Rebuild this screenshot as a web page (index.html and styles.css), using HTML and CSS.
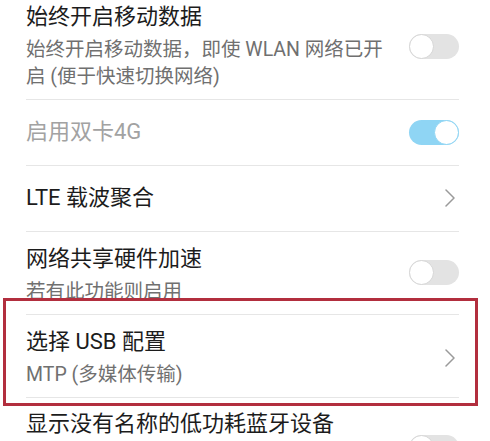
FILE: index.html
```html
<!DOCTYPE html>
<html lang="zh-CN">
<head>
<meta charset="utf-8">
<title>开发者选项</title>
<link rel="stylesheet" href="styles.css">
</head>
<body>
<div class="screen">
  <div class="list">
    <div class="row row--first">
      <div class="text">
        <div class="title">始终开启移动数据</div>
        <div class="sub">始终开启移动数据，即使 WLAN 网络已开启 (便于快速切换网络)</div>
      </div>
      <span class="switch"></span>
    </div>
    <div class="row row--single">
      <div class="text">
        <div class="title title--disabled">启用双卡4G</div>
      </div>
      <span class="switch switch--on"></span>
    </div>
    <div class="row row--single">
      <div class="text">
        <div class="title">LTE 载波聚合</div>
      </div>
      <svg class="chevron" viewBox="0 0 10 18" width="10" height="18"><polyline points="1,1 9,9 1,17" /></svg>
    </div>
    <div class="row">
      <div class="text">
        <div class="title">网络共享硬件加速</div>
        <div class="sub">若有此功能则启用</div>
      </div>
      <span class="switch switch--raised"></span>
    </div>
    <div class="row row--marked">
      <div class="text">
        <div class="title">选择 USB 配置</div>
        <div class="sub">MTP (多媒体传输)</div>
      </div>
      <svg class="chevron" viewBox="0 0 10 18" width="10" height="18"><polyline points="1,1 9,9 1,17" /></svg>
      <div class="highlight"></div>
    </div>
    <div class="row row--last">
      <div class="text">
        <div class="title">显示没有名称的低功耗蓝牙设备</div>
      </div>
      <span class="switch switch--low"></span>
    </div>
  </div>
</div>
</body>
</html>
```
FILE: styles.css
```css
html, body {
  margin: 0;
  padding: 0;
  background: #ffffff;
}

body {
  width: 490px;
  height: 441px;
  overflow: hidden;
  font-family: "Roboto", "Noto Sans CJK SC", sans-serif;
}

.screen {
  width: 490px;
  height: 441px;
  overflow: hidden;
}

.list {
  margin-top: -10px;
}

.row {
  position: relative;
  display: flex;
  align-items: center;
  margin: 0 31px 0 26px;
  padding: 12px 0 9px;
  border-bottom: 1px solid #e6e6e6;
}

.row--single {
  padding: 17px 0 18px;
}

.row--last {
  align-items: flex-start;
  border-bottom: none;
  padding-top: 11px;
  padding-bottom: 40px;
}

.text {
  flex: 1;
  min-width: 0;
  padding-right: 24px;
}

.title {
  font-size: 22px;
  line-height: 30px;
  color: #1c1c1c;
  white-space: nowrap;
}

.title--disabled {
  color: #a2a2a2;
}

.sub {
  margin-top: 4px;
  font-size: 19.5px;
  line-height: 27px;
  color: #707070;
}

.switch {
  position: relative;
  flex: none;
  width: 50px;
  height: 25px;
  border-radius: 13px;
  background: #e3e3e3;
}

.switch::after {
  content: "";
  position: absolute;
  left: 0;
  top: 0;
  width: 23px;
  height: 23px;
  border-radius: 50%;
  background: #ffffff;
  border: 1px solid #d6d6d6;
}

.switch--raised {
  margin-bottom: 4px;
}

.switch--low {
  margin-top: 26px;
}

.switch--on {
  background: #8fd5f4;
}

.switch--on::after {
  left: auto;
  right: 0;
  border-color: #8fd5f4;
}

.chevron {
  flex: none;
  margin-right: 4px;
  fill: none;
  stroke: #9a9a9a;
  stroke-width: 1.5;
  stroke-linecap: round;
  stroke-linejoin: round;
}

.highlight {
  position: absolute;
  left: -23px;
  right: -19px;
  top: -17px;
  bottom: -9px;
  border: 3.5px solid #b22e3e;
  pointer-events: none;
}
```
